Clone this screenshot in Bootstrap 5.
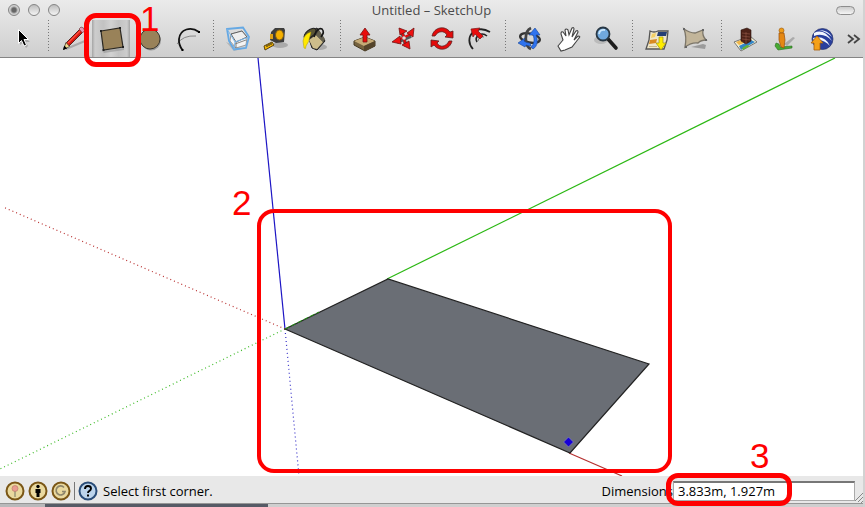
<!DOCTYPE html>
<html lang="en">
<head>
<meta charset="utf-8">
<meta name="viewport" content="width=device-width, initial-scale=1">
<title>Untitled – SketchUp</title>
<link href="https://cdn.jsdelivr.net/npm/bootstrap@5.3.0/dist/css/bootstrap.min.css" rel="stylesheet">
<style>
body{font-family:"Open Sans","Noto Sans",sans-serif;font-size:13px;line-height:16px;color:#000;background:#fff}
.window-frame{border-right:2px solid #d2d2d2}
.app-head{background:linear-gradient(#ebebeb,#cecece);border-bottom:1px solid #858585}
.title-row{height:20px}
.title-side{flex:1 1 0}
.title-text{font-size:13px;line-height:20px;font-weight:400;color:#4b4b4b}
.light{width:12px;height:12px;border-radius:50%;border:1px solid #858585;background:linear-gradient(#bdbdbd,#f4f4f4)}
.light.closer{background:radial-gradient(circle,#666 0 2px,#d0d0d0 4px)}
.pill{width:19px;height:9px;border:1px solid #8d8d8d;border-radius:5px;background:linear-gradient(#ccc,#f5f5f5)}
.tool-row{height:37px;padding-left:3px}
.tool{width:38px;height:37px;flex:none;border:0;padding:0;background:none}
.tool svg{display:block;width:32px;height:32px;margin:0 3px}
.tool.chosen{background:linear-gradient(90deg,#a5a5a5,#cdcdcd 8%,#c2c2c2 30%,#d2d2d2 50%,#c2c2c2 70%,#cdcdcd 92%,#a5a5a5)}
.divider{flex:none;width:13px;height:32px;background:linear-gradient(90deg,transparent 7px,#777 7px 8px,transparent 8px);-webkit-mask:repeating-linear-gradient(#000 0 1px,transparent 1px 3px)}
.more{width:24px}
.more svg{width:24px;margin:0}
.ring{position:absolute;border:5px solid red;border-radius:12px;pointer-events:none;z-index:3}
.digit{position:absolute;color:red;font:35px/35px "Liberation Sans",Arial,sans-serif;z-index:4;pointer-events:none}
.ring-tool{left:-8px;top:-7px;width:57px;height:54px}
.digit-tool{left:48px;top:-19px}
.scene{min-height:0;overflow:hidden}
.scene svg{display:block;width:100%;height:100%}
.status{background:#e8e8e8;height:27px;padding-top:2px;font-weight:500}
.status-icons{gap:3px;padding:0 5px}
.badge-btn{width:20px;height:20px;padding:0;border:0;background:none}
.badge-btn svg{display:block}
.bar{width:1px;height:18px;background:#777}
.field{width:182px;height:20px;border:1px solid #aaa;border-top:2px solid #777;background:#fff;font:inherit;color:#000;padding:0 4px;border-radius:0}
.ring-field{left:-7px;top:-8px;width:126px;height:33px}
.digit-field{left:77px;top:-43px}
.under{height:4px;border-top:1px solid #969696;background:linear-gradient(90deg,#b9b9bb 45px,#565b66 45px 268px,#cfcfcf 268px)}
</style>
<script src="https://cdn.jsdelivr.net/npm/bootstrap@5.3.0/dist/js/bootstrap.bundle.min.js"></script>
</head>
<body>
<div class="window-frame d-flex flex-column vh-100 overflow-hidden">
<header class="app-head">
  <div class="title-row d-flex align-items-center px-2">
    <div class="title-side d-flex gap-2"><span class="light closer"></span><span class="light"></span><span class="light"></span></div>
    <h1 class="title-text m-0">Untitled – SketchUp</h1>
    <div class="title-side d-flex justify-content-end"><span class="pill"></span></div>
  </div>
  <div class="tool-row d-flex" role="toolbar" aria-label="Tools">
    <button class="tool" aria-label="Select"><svg viewBox="0 0 32 32"><path d="M14 9v13l3-2 3 5 2-2-2-4h4z" fill="#aaa"/><path d="M12.500 6.500v14l3-3 2.500 5.500 2.500-1-2.500-5.500h4.500z" stroke="#fff"/></svg></button>
    <span class="divider"></span>
    <button class="tool" aria-label="Line"><svg viewBox="0 0 32 32"><path d="M9 26 28 18" stroke="#aaa" stroke-width="2"/><path d="M8 21L23 6l3 3-15 15z" fill="#d9160e" stroke="#35100c" stroke-width=".8"/><path d="M9 19.500l3.500 4-6 3z" fill="#f2dc8c" stroke="#554" stroke-width=".8"/><path d="M22 6l2-2q3 0 3.500 3.500L25.500 10z" fill="#e59bb6" stroke="#633" stroke-width=".6"/><path d="M11 20 23 8" stroke="#ff5040" stroke-width="1.200"/><path d="M6 27l1.200-4.500 3 3z"/></svg></button>
    <div class="position-relative">
      <button class="tool chosen" aria-label="Rectangle" aria-pressed="true"><svg viewBox="0 0 32 32"><path d="M7 28l22-3v2l-20 3z" fill="#888" opacity=".5"/><path d="M6 8l19-3 3 19-19.500 3z" fill="#998259" stroke="#2b2822" stroke-width="1.200"/><path d="M5 7h2v2H5zM24 4h2v2h-2zM27 23h2v2h-2zM7.500 26h2v2h-2z" fill="#222"/></svg></button>
      <span class="ring ring-tool"></span><span class="digit digit-tool">1</span>
    </div>
    <button class="tool" aria-label="Circle"><svg viewBox="0 0 32 32"><circle cx="18" cy="17.500" r="10" fill="#999"/><circle cx="17" cy="16" r="10" fill="#998259" stroke="#3b372e"/></svg></button>
    <button class="tool" aria-label="Arc"><svg viewBox="0 0 32 32" fill="none"><path d="M6 21Q12 12 25 13" stroke="#888"/><path d="M28 9C20 3 9 6 8 16q-.5 6 3.500 11" stroke="#111" stroke-width="1.800"/><path d="M27 8h2v2h-2zM10.500 26h2v2h-2z" fill="#000"/></svg></button>
    <span class="divider"></span>
    <button class="tool" aria-label="Make Component"><svg viewBox="0 0 32 32"><path d="M4 19l8 9 8-2z" fill="#b5b5b5"/><path d="M9 11l11-3 5 6-1 8-10 3-6-7z" fill="#f4f4f4" stroke="#888" stroke-width=".8"/><path d="M9 11l11-3 5 6-11 5z" fill="#eee" stroke="#555" stroke-width=".9"/><path d="M14 19v6M13 21l11-4" stroke="#777" stroke-width=".9"/><path d="M5 6l16-1.500L27 14l-3 11-12 1.500L7 18z" fill="none" stroke="#66a9e4" stroke-width="1.800"/><path d="M5 6l8 13-1 7.500M13 19l14-5" fill="none" stroke="#7ab6ea" stroke-width="1"/></svg></button>
    <button class="tool" aria-label="Tape Measure"><svg viewBox="0 0 32 32"><ellipse cx="20" cy="22" rx="8" ry="3" fill="#aaa"/><path d="M11 9l4-4h9l1 2-1 12-8 1-6-3z" fill="#3d3d3d"/><ellipse cx="19.500" cy="12" rx="4" ry="5" fill="#f5b000" stroke="#805e14"/><path d="M10 11h3v5h-3z" fill="#dca018"/><path d="M4 23l8-4 2 3-9 5z" fill="#f4b600" stroke="#5a430c"/><path d="M7 22v2M9 21v2M11 20v2" stroke="#222"/></svg></button>
    <button class="tool" aria-label="Paint Bucket"><svg viewBox="0 0 32 32"><ellipse cx="22" cy="24" rx="7" ry="3" fill="#aaa"/><path d="M9 10l10-5 8 13-8 9-5-2z" fill="#44423a" stroke="#222"/><path d="M11 17l7-5 7 7-6 7-4-1z" fill="#cdbd8b"/><path d="M18 12l7 7 2-3-6-9z" fill="#64604f"/><ellipse cx="12" cy="10.500" rx="7" ry="3.500" transform="rotate(-38 12 10.500)" fill="#5a5536" stroke="#222"/><path d="M13 9Q6 11 5 18l1 7q2 2 2-2 3-4 4-10z" fill="#ffe800" stroke="#a99912" stroke-width=".5"/><path d="M16 14q3-10 8-8 3 3-1 8" fill="none" stroke="#161616" stroke-width="1.600"/></svg></button>
    <span class="divider"></span>
    <button class="tool" aria-label="Push/Pull"><svg viewBox="0 0 32 32"><path d="M5 18l11-4 10 4v5l-10 5-11-6z" fill="#75623f" stroke="#443821"/><path d="M5 18l11-4 10 4-11 5z" fill="#c5aa76"/><path d="M15 23v5l11-5v-5z" fill="#54442b"/><path d="M16 5l5 7h-3v7h-4v-7h-3z" fill="#e80b0b" stroke="#791414" stroke-width=".8"/></svg></button>
    <button class="tool" aria-label="Move"><svg viewBox="0 0 32 32"><path d="M15 9l4 14M10 19l14-6" stroke="#555" stroke-width="3.600"/><path d="M15 8l4 15M9 18l15-7" stroke="#de0c0c" stroke-width="2.200"/><path d="M12 5l8 3-7 4zM27 5l-1 9-6-4zM23 26l-8-4 7-4zM5 19l8-6 1 8z" fill="#ee1010" stroke="#731313" stroke-width=".8"/><circle cx="17" cy="15" r="1.800" fill="#ddd"/></svg></button>
    <button class="tool" aria-label="Rotate"><svg viewBox="0 0 32 32"><path d="M7 13C9 4 20 2 25 9l3-1v7l-8-1 2-2c-3-5-9-4-12 1z" fill="#e30b0b" stroke="#5c2020" stroke-width=".8"/><path d="M27 18c-2 9-13 11-18 4l-3 2v-7l8 1-2 2c3 5 9 4 12-2z" fill="#e30b0b" stroke="#5c2020" stroke-width=".8"/></svg></button>
    <button class="tool" aria-label="Offset"><svg viewBox="0 0 32 32" fill="none"><path d="M10 26C0 15 12 0 27 9" stroke="#222" stroke-width="1.800"/><path d="M14 19c-3-5 4-11 10-6" stroke="#222" stroke-width="1.600"/><path d="M15 18q1-5 6-4" stroke="#777"/><path d="M8 6l9-1-2 3 5 5-3 3-5-5-2 3z" fill="#e80d0d" stroke="#751818" stroke-width=".7"/></svg></button>
    <span class="divider"></span>
    <button class="tool" aria-label="Orbit"><svg viewBox="0 0 32 32" fill="none"><ellipse cx="16" cy="15" rx="10" ry="4.500" transform="rotate(12 16 15)" stroke="#333" stroke-width="2.400"/><path d="M17 5C10 8 10 23 17 26" stroke="#444" stroke-width="2.800"/><path d="M19 26c5-3 5-9 3-14h4l-5-7-6 7h4c2 5 1 9-2 12z" fill="#2f73ee" stroke="#164597" stroke-width=".6"/><path d="M16 20q-4 0-6-2l1-3-7 5 7 4 1-2q2 1 5 1z" fill="#2f73ee" stroke="#164597" stroke-width=".6"/></svg></button>
    <button class="tool" aria-label="Pan"><svg viewBox="0 0 32 32"><path d="M6 23l5-6-2-6q0-3 2-2l3 4-1-6q1-2 3 0l1 5 3-7q2-1 2 1l-2 8 4-6q2-1 2 1l-4 8 4-4q3 0 1 2l-7 9-7 3-4 1z" fill="#fff" stroke="#444" stroke-width="1.100"/></svg></button>
    <button class="tool" aria-label="Zoom"><svg viewBox="0 0 32 32"><ellipse cx="11" cy="17" rx="7" ry="4" fill="#bbb"/><path d="M18 16l8 9" stroke="#1d1d1d" stroke-width="3.600" stroke-linecap="round"/><circle cx="13" cy="11" r="6.500" fill="#70a8dd" stroke="#283744" stroke-width="1.800"/><path d="M9 11q1-5 6-4" fill="none" stroke="#c9e5fb" stroke-width="1.800"/></svg></button>
    <span class="divider"></span>
    <button class="tool" aria-label="Get Current View"><svg viewBox="0 0 32 32"><path d="M9 8q4 2 8 0h10l-1 9-3 9H5l3-9z" fill="#efe6c8" stroke="#555" stroke-width="1.300"/><path d="M17 9h9l-1 4h-9z" fill="#263f75"/><path d="M11 11l4-1-1 4-4 1z" fill="#f4d064"/><path d="M9 17l7-1-1 4-7 1z" fill="#d98a20"/><path d="M8 23h8v1H8z" fill="#c9b98a"/><path d="M18 14h4v6h3l-5 7-5-7h3z" fill="#ffed00" stroke="#9c9413" stroke-width=".7"/></svg></button>
    <button class="tool" aria-label="Toggle Terrain"><svg viewBox="0 0 32 32"><path d="M12 24l12-3 3 1-1 4z" fill="#9b9b9b"/><path d="M5 6q6 4 11 4l8-3q-1 6 3 10-5 0-8 3-6-1-13 4Q8 14 5 6z" fill="#c2b59a" stroke="#7c7669" stroke-width="1.300"/><path d="M4 5h2v2H4zM23 6h2v2h-2zM26 16h2v2h-2zM6 23h2v2H6z" fill="#666"/></svg></button>
    <span class="divider"></span>
    <button class="tool" aria-label="3D Warehouse"><svg viewBox="0 0 32 32"><path d="M4 19l16-6 7 6-16 9z" fill="#f6f1d2" stroke="#777"/><path d="M9 23l12-6 4 2-14 8z" fill="#3285c8"/><path d="M12 25l5-3 3 1-7 4z" fill="#65b338"/><path d="M6 19l5-2 3 3-5 2z" fill="#efb64a"/><path d="M11 7l6-2 4 2v11l-5 3-5-3z" fill="#4d2218" stroke="#2c150f" stroke-width=".6"/><path d="M16 9v12M12 10l8 1M12 13l8 1M12 16l8 1" stroke="#8a5040" stroke-width=".7"/></svg></button>
    <button class="tool" aria-label="Street View"><svg viewBox="0 0 32 32"><path d="M16 21l9-7 2 1-8 8z" fill="#aaa"/><path d="M8 20l3 1 1 3 12-1v2l-14 2-3-4z" fill="#47aa31" stroke="#286d20" stroke-width=".6"/><circle cx="13.500" cy="7.500" r="2.500" fill="#ef9c18" stroke="#97560b" stroke-width=".6"/><path d="M11 10h5l1 7-1 8-3-1-2-7z" fill="#e58813" stroke="#964f0b" stroke-width=".7"/></svg></button>
    <button class="tool" aria-label="Google Earth"><svg viewBox="0 0 32 32"><circle cx="16.500" cy="16" r="10.500" fill="#293f9d" stroke="#25306a" stroke-width=".7"/><path d="M8 10q10-5 18 8-8-9-18-5zM7 15q12-3 17 8-7-8-16-5zM13 7q9 0 13 7-5-5-13-7z" fill="#f2f6ff"/><path d="M11 13l6 7h-3v7H8v-7H5z" fill="#f5a018" stroke="#a75e0b" stroke-width=".8"/></svg></button>
    <button class="tool more" aria-label="More tools"><svg viewBox="0 0 24 32" fill="none" stroke="#444" stroke-width="1.800"><path d="M7 12l5 4-5 4M13 12l5 4-5 4"/></svg></button>
  </div>
</header>
<main class="scene flex-grow-1">
  <svg viewBox="0 0 863 418" preserveAspectRatio="xMidYMid slice" role="img" aria-label="Model view">
    <g fill="none" stroke-width="1.200">
      <path d="M258 0l27 271" stroke="#1c14c4"/><path d="M285 271l14 147" stroke="#3832c8" stroke-dasharray="1 3"/>
      <path d="M387 221L835 0" stroke="#2cb814"/><path d="M285 271L0 411" stroke="#3cba26" stroke-dasharray="1 3"/>
      <path d="M285 271L3 149" stroke="#b82e2e" stroke-dasharray="1 3"/><path d="M569 395l53 23" stroke="#b63030"/>
    </g>
    <path d="M285 271l103-50 261 85-79 89z" fill="#6a6e75" stroke="#222" stroke-width="1.200"/>
    <path d="M285 271l34-17" stroke="#259414" stroke-dasharray="5 2"/>
    <path d="M568.500 379l5 5-5 5-5-5z" fill="#1600d8" stroke="#7778ad"/>
    <rect x="259" y="153" width="411" height="260" rx="15" fill="none" stroke="red" stroke-width="4"/>
    <text x="232" y="157" fill="red" font-family="Liberation Sans, Arial, sans-serif" font-size="35">2</text>
  </svg>
</main>
<footer class="status d-flex align-items-center">
  <div class="status-icons d-flex align-items-center">
  <button class="badge-btn" aria-label="Geo-location"><svg viewBox="0 0 20 20"><circle cx="10" cy="10" r="8.500" fill="#ead99f" stroke="#7a5616" stroke-width="2"/><path d="M10 10v6" stroke="#776"/><circle cx="10" cy="7.500" r="3" fill="#e99c90" stroke="#b77668" stroke-width=".6"/></svg></button>
  <button class="badge-btn" aria-label="Credits"><svg viewBox="0 0 20 20"><circle cx="10" cy="10" r="8.500" fill="#ead99f" stroke="#7a5616" stroke-width="2"/><circle cx="10" cy="5.500" r="1.700"/><path d="M7.500 8h5v4h-1v4h-3v-4h-1z"/></svg></button>
  <button class="badge-btn" aria-label="Sign in"><svg viewBox="0 0 20 20"><circle cx="10" cy="10" r="8.500" fill="#ead99f" stroke="#7a5616" stroke-width="2"/><path d="M13 6.500a4.500 4.500 0 1 0 1 4h-3" fill="none" stroke="#8d856b" stroke-width="1.700"/></svg></button>
  <span class="bar"></span>
  <button class="badge-btn" aria-label="Help"><svg viewBox="0 0 20 20"><circle cx="10" cy="10" r="8.500" fill="#bcd4ec" stroke="#294c78" stroke-width="2"/><path d="M7 8q0-3 3-3t3 2.500q0 1.500-1.500 2.300T10 12" fill="none" stroke="#000" stroke-width="1.900"/><path d="M9 13.500h2v2H9z"/></svg></button>
  </div>
  <span>Select first corner.</span>
  <label class="ms-auto" for="dims">Dimensions</label>
  <div class="position-relative d-flex"><input class="field" id="dims" type="text" value="3.833m, 1.927m"><span class="ring ring-field"></span><span class="digit digit-field">3</span></div>
  <svg class="align-self-end" width="8" height="12" viewBox="0 0 8 12" stroke="#888"><path d="M0 10 8 2M3 11l5-5M6 12l2-2"/></svg>
</footer>
<div class="under"></div>
</div>
</body>
</html>
